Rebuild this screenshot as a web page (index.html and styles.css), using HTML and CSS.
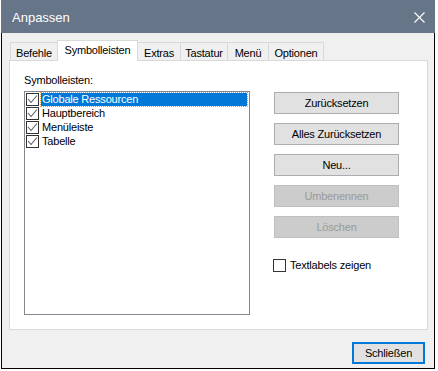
FILE: index.html
```html
<!DOCTYPE html>
<html lang="de">
<head>
  <meta charset="UTF-8" />
  <title>Anpassen</title>
  <link rel="stylesheet" href="styles.css">
</head>
<body>
  <div class="window">
    <div class="titlebar">
      <span class="title">Anpassen</span>
      <svg class="close" width="11" height="11" viewBox="0 0 11 11">
        <path d="M0.5 0.5 L10.5 10.5 M10.5 0.5 L0.5 10.5" stroke="#fff" stroke-width="1.1" fill="none" />
      </svg>
    </div>
    <div class="dialog">
      <div class="tabs">
        <div class="tab">Befehle</div>
        <div class="tab active">Symbolleisten</div>
        <div class="tab">Extras</div>
        <div class="tab">Tastatur</div>
        <div class="tab">Menü</div>
        <div class="tab">Optionen</div>
      </div>
      <div class="panel">
        <div class="left">
          <div class="label">Symbolleisten:</div>
          <div class="listbox">
            <div class="item selected">
              <span class="check"><svg width="11" height="11" viewBox="0 0 11 11"><path d="M1 5 L4 8.5 L10 1.5" stroke="#5c5c5c" stroke-width="1.1" fill="none" /></svg></span>
              <span class="text">Globale Ressourcen</span>
            </div>
            <div class="item">
              <span class="check"><svg width="11" height="11" viewBox="0 0 11 11"><path d="M1 5 L4 8.5 L10 1.5" stroke="#5c5c5c" stroke-width="1.1" fill="none" /></svg></span>
              <span class="text">Hauptbereich</span>
            </div>
            <div class="item">
              <span class="check"><svg width="11" height="11" viewBox="0 0 11 11"><path d="M1 5 L4 8.5 L10 1.5" stroke="#5c5c5c" stroke-width="1.1" fill="none" /></svg></span>
              <span class="text">Menüleiste</span>
            </div>
            <div class="item">
              <span class="check"><svg width="11" height="11" viewBox="0 0 11 11"><path d="M1 5 L4 8.5 L10 1.5" stroke="#5c5c5c" stroke-width="1.1" fill="none" /></svg></span>
              <span class="text">Tabelle</span>
            </div>
          </div>
        </div>
        <div class="right">
          <button class="btn">Zurücksetzen</button>
          <button class="btn">Alles Zurücksetzen</button>
          <button class="btn">Neu...</button>
          <button class="btn" disabled>Umbenennen</button>
          <button class="btn" disabled>Löschen</button>
          <label class="option"><span class="box"></span>Textlabels zeigen</label>
        </div>
      </div>
      <div class="footer">
        <button class="btn default">Schließen</button>
      </div>
    </div>
  </div>
</body>
</html>
```

FILE: styles.css
```css
body {
  margin: 0;
  background: #fff;
  font-family: "Liberation Sans", Arial, sans-serif;
  font-size: 11px;
  letter-spacing: -0.2px;
  color: #000;
}
.window {
  margin-left: 1px;
  width: 434px;
}
.titlebar {
  height: 33px;
  background: #677589;
  color: #fff;
  display: flex;
  align-items: center;
  justify-content: space-between;
  padding: 0 10px 0 11px;
  box-sizing: border-box;
}
.title {
  font-size: 13px;
  letter-spacing: 0;
  margin-top: 1px;
}
.close {
  margin-top: 1px;
}
.dialog {
  height: 336px;
  box-sizing: border-box;
  border: 1px solid #000;
  border-top: none;
  background: #f0f0f0;
  padding: 7px 6px 0 7px;
}
.tabs {
  display: flex;
  align-items: flex-end;
  height: 20px;
  padding-left: 1px;
}
.tab {
  height: 18px;
  box-sizing: border-box;
  border: 1px solid #d9d9d9;
  border-bottom: none;
  background: #f0f0f0;
  line-height: 16px;
  padding-top: 2px;
  text-align: center;
  margin-left: -1px;
}
.tab:first-child {
  margin-left: 0;
}
.tab:nth-child(1) { width: 48px; }
.tab:nth-child(2) { width: 81px; }
.tab:nth-child(3) { width: 44px; }
.tab:nth-child(4) { width: 48px; }
.tab:nth-child(5) { width: 42px; }
.tab:nth-child(6) { width: 56px; }
.tab.active {
  height: 21px;
  padding-top: 1px;
  background: #fff;
  margin-bottom: -1px;
  position: relative;
  z-index: 1;
}
.panel {
  width: 419px;
  height: 270px;
  box-sizing: border-box;
  border: 1px solid #d9d9d9;
  background: #fff;
  display: flex;
  padding: 13px 0 0 14px;
}
.left {
  width: 226px;
}
.label {
  line-height: 13px;
  margin-bottom: 4px;
}
.listbox {
  height: 224px;
  box-sizing: border-box;
  border: 1px solid #828790;
  padding: 0 1px;
}
.item {
  height: 14px;
  display: flex;
  align-items: center;
}
.check {
  width: 13px;
  height: 13px;
  box-sizing: border-box;
  border: 1px solid #333;
  background: #fff;
  display: flex;
  align-items: center;
  justify-content: center;
}
.text {
  margin-left: 2px;
  padding: 0 1px;
  line-height: 13px;
}
.item.selected .text {
  flex: 1;
  margin-right: 1px;
  background: #0078d7;
  color: #fff;
  outline: 1px dotted #f29b2c;
}
.right {
  margin-left: 24px;
  padding-top: 18px;
  display: flex;
  flex-direction: column;
}
.btn {
  width: 125px;
  height: 22px;
  box-sizing: border-box;
  border: 1px solid #adadad;
  background: #e1e1e1;
  font-family: inherit;
  font-size: 11px;
  letter-spacing: -0.2px;
  color: #000;
  padding: 0;
  margin-bottom: 9px;
}
.btn:disabled {
  background: #cccccc;
  border-color: #bfbfbf;
  color: #9a9a9a;
}
.option {
  display: flex;
  align-items: center;
  margin: 12px 0 0 -1px;
  line-height: 13px;
}
.box {
  width: 13px;
  height: 13px;
  box-sizing: border-box;
  border: 1px solid #333;
  margin-right: 4px;
}
.footer {
  display: flex;
  justify-content: flex-end;
  padding: 12px 3px 0 0;
}
.btn.default {
  width: 73px;
  border: 2px solid #0078d7;
  margin: 0;
}
```
